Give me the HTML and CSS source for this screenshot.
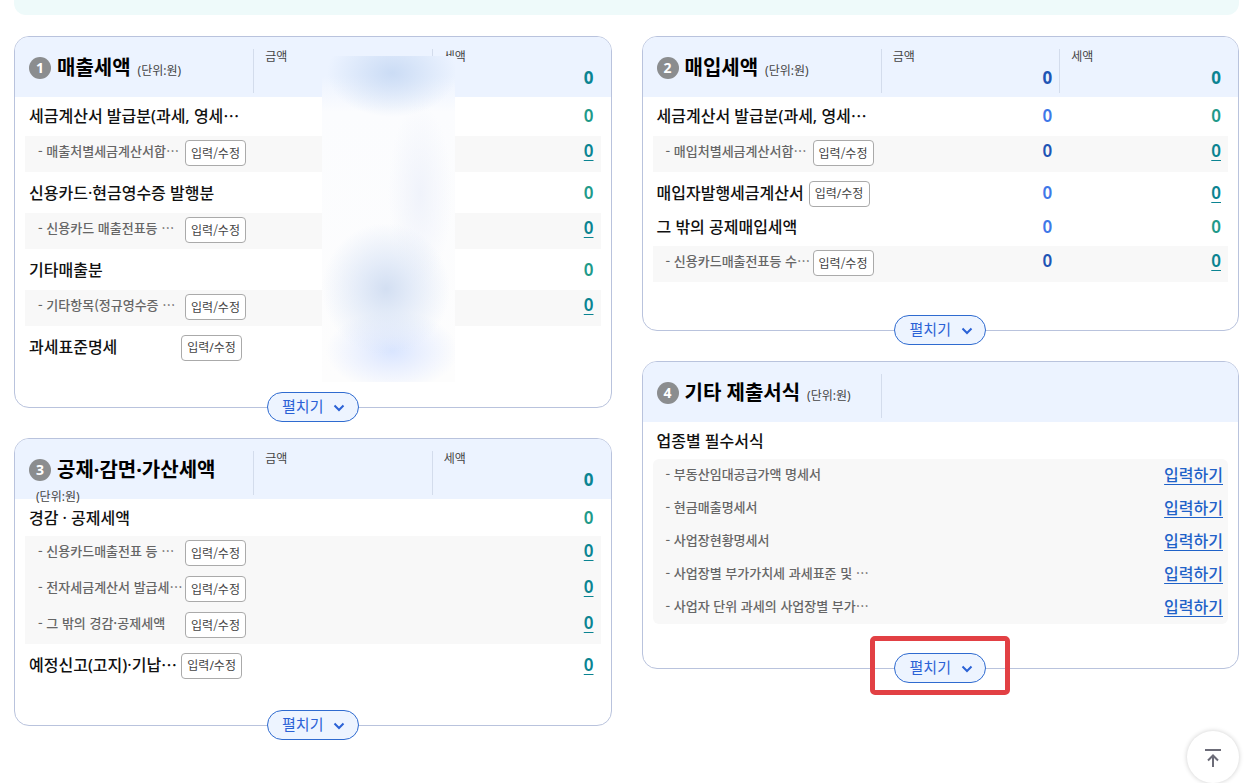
FILE: index.html
```html
<!DOCTYPE html>
<html lang="ko">
<head>
    <meta charset="UTF-8">
    <meta name="viewport" content="width=device-width, initial-scale=1.0">
    <title>부가가치세 신고</title>
    <link rel="stylesheet" href="styles.css">
</head>
<body>
    <div class="banner"></div>

    <main class="board">
        <div class="column">
            <section class="card">
                <table class="tax">
                    <thead>
                        <tr>
                            <th class="col-name"><div class="head-title"><span class="num">1</span><h2>매출세액</h2><span class="unit">(단위:원)</span></div></th>
                            <th class="col-amount"><div class="head-cell"><span>금액</span></div></th>
                            <th class="col-tax"><div class="head-cell"><span>세액</span><b>0</b></div></th>
                        </tr>
                    </thead>
                    <tbody>
                        <tr class="main">
                            <td colspan="2"><div class="item"><span>세금계산서 발급분(과세, 영세⋯</span></div></td>
                            <td class="tax-value">0</td>
                        </tr>
                        <tr class="sub">
                            <td colspan="2"><div class="item"><span class="name">- 매출처별세금계산서합⋯</span><button class="edit" type="button">입력/수정</button></div></td>
                            <td class="tax-value"><a href="#">0</a></td>
                        </tr>
                        <tr class="main">
                            <td colspan="2"><div class="item"><span>신용카드·현금영수증 발행분</span></div></td>
                            <td class="tax-value">0</td>
                        </tr>
                        <tr class="sub">
                            <td colspan="2"><div class="item"><span class="name">- 신용카드 매출전표등 ⋯</span><button class="edit" type="button">입력/수정</button></div></td>
                            <td class="tax-value"><a href="#">0</a></td>
                        </tr>
                        <tr class="main">
                            <td colspan="2"><div class="item"><span>기타매출분</span></div></td>
                            <td class="tax-value">0</td>
                        </tr>
                        <tr class="sub">
                            <td colspan="2"><div class="item"><span class="name">- 기타항목(정규영수증 ⋯</span><button class="edit" type="button">입력/수정</button></div></td>
                            <td class="tax-value"><a href="#">0</a></td>
                        </tr>
                        <tr class="main">
                            <td colspan="2"><div class="item"><span class="name">과세표준명세</span><button class="edit" type="button">입력/수정</button></div></td>
                            <td class="tax-value"></td>
                        </tr>
                    </tbody>
                </table>
                <div class="mask"></div>
                <button class="expand" type="button">펼치기
                    <svg width="12" height="8" viewBox="0 0 12 8"><path d="M1.5 1.5 6 6l4.5-4.5"/></svg>
                </button>
            </section>

            <section class="card">
                <table class="tax tight">
                    <thead>
                        <tr>
                            <th class="col-name"><div class="head-title"><span class="num">3</span><h2>공제·감면·가산세액</h2> <span class="unit">(단위:원)</span></div></th>
                            <th class="col-amount"><div class="head-cell"><span>금액</span></div></th>
                            <th class="col-tax"><div class="head-cell"><span>세액</span><b>0</b></div></th>
                        </tr>
                    </thead>
                    <tbody>
                        <tr class="main">
                            <td colspan="2"><div class="item"><span>경감 · 공제세액</span></div></td>
                            <td class="tax-value">0</td>
                        </tr>
                        <tr class="sub">
                            <td colspan="2"><div class="item"><span class="name">- 신용카드매출전표 등 ⋯</span><button class="edit" type="button">입력/수정</button></div></td>
                            <td class="tax-value"><a href="#">0</a></td>
                        </tr>
                        <tr class="sub">
                            <td colspan="2"><div class="item"><span class="name">- 전자세금계산서 발급세⋯</span><button class="edit" type="button">입력/수정</button></div></td>
                            <td class="tax-value"><a href="#">0</a></td>
                        </tr>
                        <tr class="sub">
                            <td colspan="2"><div class="item"><span class="name">- 그 밖의 경감·공제세액</span><button class="edit" type="button">입력/수정</button></div></td>
                            <td class="tax-value"><a href="#">0</a></td>
                        </tr>
                        <tr class="main">
                            <td colspan="2"><div class="item"><span class="name">예정신고(고지)·기납⋯</span><button class="edit" type="button">입력/수정</button></div></td>
                            <td class="tax-value"><a href="#">0</a></td>
                        </tr>
                    </tbody>
                </table>
                <button class="expand" type="button">펼치기
                    <svg width="12" height="8" viewBox="0 0 12 8"><path d="M1.5 1.5 6 6l4.5-4.5"/></svg>
                </button>
            </section>
        </div>

        <div class="column">
            <section class="card">
                <table class="tax">
                    <thead>
                        <tr>
                            <th class="col-name"><div class="head-title"><span class="num">2</span><h2>매입세액</h2><span class="unit">(단위:원)</span></div></th>
                            <th class="col-amount"><div class="head-cell"><span>금액</span><b>0</b></div></th>
                            <th class="col-tax"><div class="head-cell"><span>세액</span><b>0</b></div></th>
                        </tr>
                    </thead>
                    <tbody>
                        <tr class="main">
                            <td><div class="item"><span>세금계산서 발급분(과세, 영세⋯</span></div></td>
                            <td class="amount-value">0</td>
                            <td class="tax-value">0</td>
                        </tr>
                        <tr class="sub">
                            <td><div class="item"><span class="name">- 매입처별세금계산서합⋯</span><button class="edit" type="button">입력/수정</button></div></td>
                            <td class="amount-value">0</td>
                            <td class="tax-value"><a href="#">0</a></td>
                        </tr>
                        <tr class="main">
                            <td><div class="item"><span class="name">매입자발행세금계산서</span><button class="edit" type="button">입력/수정</button></div></td>
                            <td class="amount-value">0</td>
                            <td class="tax-value"><a href="#">0</a></td>
                        </tr>
                        <tr class="main">
                            <td><div class="item"><span>그 밖의 공제매입세액</span></div></td>
                            <td class="amount-value">0</td>
                            <td class="tax-value">0</td>
                        </tr>
                        <tr class="sub">
                            <td><div class="item"><span class="name">- 신용카드매출전표등 수⋯</span><button class="edit" type="button">입력/수정</button></div></td>
                            <td class="amount-value">0</td>
                            <td class="tax-value"><a href="#">0</a></td>
                        </tr>
                    </tbody>
                </table>
                <button class="expand expand-low" type="button">펼치기
                    <svg width="12" height="8" viewBox="0 0 12 8"><path d="M1.5 1.5 6 6l4.5-4.5"/></svg>
                </button>
            </section>

            <section class="card">
                <div class="forms-head">
                    <div class="head-title"><span class="num">4</span><h2>기타 제출서식</h2><span class="unit">(단위:원)</span></div>
                    <div class="head-cell"></div>
                </div>
                <h3 class="forms-title">업종별 필수서식</h3>
                <ul class="forms">
                    <li><span>- 부동산임대공급가액 명세서</span><a href="#">입력하기</a></li>
                    <li><span>- 현금매출명세서</span><a href="#">입력하기</a></li>
                    <li><span>- 사업장현황명세서</span><a href="#">입력하기</a></li>
                    <li><span>- 사업장별 부가가치세 과세표준 및 ⋯</span><a href="#">입력하기</a></li>
                    <li><span>- 사업자 단위 과세의 사업장별 부가⋯</span><a href="#">입력하기</a></li>
                </ul>
                <button class="expand marked" type="button">펼치기
                    <svg width="12" height="8" viewBox="0 0 12 8"><path d="M1.5 1.5 6 6l4.5-4.5"/></svg>
                </button>
            </section>
        </div>
    </main>

    <button class="to-top" type="button" aria-label="맨 위로">
        <svg width="20" height="22" viewBox="0 0 20 22"><path d="M2 4h16M10 21V10M5 14.5l5-5 5 5"/></svg>
    </button>
</body>
</html>
```
FILE: styles.css
```css
* {
    box-sizing: border-box;
}
body {
    margin: 0;
    min-height: 100vh;
    padding: 0 10px 0 14px;
    font-family: "Noto Sans", "Noto Sans CJK KR", sans-serif;
    font-size: 16px;
    line-height: 24px;
    color: #111;
    background-color: #fff;
}
h2, h3 {
    margin: 0;
}
button {
    font-family: inherit;
    cursor: pointer;
}
.banner {
    height: 15px;
    background-color: #eefafa;
    border-radius: 0 0 12px 12px;
}
.board {
    display: grid;
    grid-template-columns: 1fr 1fr;
    gap: 30px;
    margin-top: 21px;
    align-items: start;
}
.column {
    display: flex;
    flex-direction: column;
    gap: 30px;
}
.card {
    position: relative;
    display: flex;
    flex-direction: column;
    border: 1px solid #b9c3dd;
    border-radius: 15px;
}

/* header */
.tax {
    width: 100%;
    table-layout: fixed;
    border-collapse: separate;
    border-spacing: 0;
}
.tax th {
    padding: 0;
    background-color: #ecf3ff;
    text-align: left;
    vertical-align: top;
    font-weight: normal;
}
.tax th:first-child {
    border-top-left-radius: 14px;
}
.tax th:last-child {
    border-top-right-radius: 14px;
}
.col-name {
    width: 40%;
}
.col-amount, .col-tax {
    width: 30%;
}
.head-title {
    height: 60px;
    padding: 19px 0 0 14px;
    line-height: 24px;
}
.head-title h2 {
    display: inline;
    font-size: 20px;
    font-weight: 700;
    color: #000;
}
.num {
    display: inline-block;
    width: 22px;
    height: 22px;
    margin-right: 6px;
    border-radius: 50%;
    background-color: #8b8d8f;
    color: #fff;
    font-size: 14px;
    font-weight: 700;
    line-height: 21px;
    text-align: center;
    vertical-align: 2px;
}
.unit {
    margin-left: 7px;
    font-size: 12px;
    line-height: 20px;
    white-space: nowrap;
    color: #444;
}
.head-cell {
    display: flex;
    flex-direction: column;
    height: 44px;
    margin-top: 12px;
    padding-left: 11px;
    border-left: 1px solid #d3dcec;
    font-size: 12px;
    line-height: 16px;
    color: #444;
}
.head-cell b {
    align-self: flex-end;
    padding-right: 17px;
    font-size: 17px;
    font-weight: 700;
    line-height: 26px;
    color: #0b8492;
}
.col-amount .head-cell b {
    padding-right: 7px;
    color: #1f55b5;
}

/* rows */
.tax td {
    padding-top: 9px;
    padding-bottom: 8px;
    vertical-align: top;
    background-clip: padding-box;
}
.tax td:first-child {
    padding-left: 0;
    border-left: 10px solid transparent;
}
.tax td:last-child {
    border-right: 10px solid transparent;
}
.tax .main:first-child td {
    padding-top: 7px;
    padding-bottom: 8px;
}
.tax.tight .main:first-child td {
    padding-bottom: 6px;
}
.tax .main + .main td {
    padding-top: 2px;
    padding-bottom: 7px;
}
.tax .sub td {
    padding-top: 3px;
    padding-bottom: 9px;
    background-color: #f8f8f8;
}
.item {
    display: flex;
    height: 24px;
    padding-left: 4px;
    white-space: nowrap;
    font-weight: 500;
}
.main .name {
    flex: 0 0 148px;
    margin-right: 4px;
}
.sub .item {
    padding-left: 13px;
    font-family: "Noto Sans CJK KR", sans-serif;
    font-size: 13px;
    color: #666;
}
.sub .name {
    flex: 0 0 147px;
}
.edit {
    flex: none;
    width: 61px;
    height: 26px;
    padding: 0;
    border: 1px solid #aaa;
    border-radius: 4px;
    background-color: #fff;
    color: #444;
    font-size: 12px;
    line-height: 22px;
}
.sub .edit {
    margin-top: 1px;
}
.amount-value, .tax-value {
    text-align: right;
    font-size: 17px;
    font-weight: 600;
}
.amount-value {
    padding-right: 7px;
    color: #3f78e8;
}
.sub .amount-value {
    color: #1f55b5;
}
.tax-value {
    padding-right: 7px;
    color: #1f9a8a;
}
.tax-value a {
    color: #0b8492;
    text-decoration: underline;
    text-decoration-thickness: 1px;
    text-underline-offset: 3px;
}

/* blurred private amounts */
.mask {
    position: absolute;
    top: 19px;
    left: 307px;
    width: 133px;
    height: 326px;
    background:
        radial-gradient(ellipse 65px 44px at 70px 17px, #cbdcf5 0%, #cbdcf5b3 30%, #e4edfc00 100%),
        radial-gradient(ellipse 64px 66px at 64px 233px, #d3dff2 0%, #d9e4f6b3 40%, #edf2fd00 100%),
        radial-gradient(ellipse 66px 40px at 70px 295px, #d9e5ff 0%, #e0e9ffb3 40%, #f4f7ff00 100%),
        radial-gradient(ellipse 32px 90px at 98px 138px, #f0f3fb 0%, #f6f8fc00 100%),
        linear-gradient(#ecf3ff 0, #ecf3ff 20px, #fbfcfe 56px, #fdfdfd 100%);
}

/* forms */
.forms-head {
    display: grid;
    grid-template-columns: 40% 60%;
    background-color: #ecf3ff;
    border-radius: 14px 14px 0 0;
}
.forms-title {
    padding: 7px 14px 6px;
    font-size: 16px;
    font-weight: 500;
}
.forms {
    margin: 0 10px;
    padding: 0;
    list-style: none;
    background-color: #f8f8f8;
    border-radius: 6px;
}
.forms li {
    display: flex;
    justify-content: space-between;
    padding: 3px 5px 6px 13px;
    font-family: "Noto Sans CJK KR", sans-serif;
    font-size: 13px;
    font-weight: 500;
    color: #666;
}
.forms a {
    font-size: 16px;
    color: #1f62c8;
    text-underline-offset: 3px;
    text-decoration-thickness: 1px;
}

.expand {
    position: relative;
    align-self: center;
    display: flex;
    align-items: center;
    justify-content: center;
    gap: 10px;
    width: 92px;
    height: 30px;
    margin: 25px 0 -15px;
    padding: 0 0 2px 2px;
    border: 1px solid #2f6bd0;
    border-radius: 15px;
    background-color: #edf4ff;
    color: #2b62d6;
    font-size: 15px;
    line-height: 24px;
}
.expand-low {
    margin-top: 33px;
}
.expand svg {
    margin-top: 4px;
    fill: none;
    stroke: #2b62d6;
    stroke-width: 2;
}
.marked {
    margin-top: 29px;
}
.marked::after {
    content: "";
    position: absolute;
    inset: -18px -25px -13px;
    border: 5px solid #e24044;
    border-radius: 5px;
}
.to-top {
    position: fixed;
    right: 10px;
    bottom: 0;
    display: grid;
    place-items: center;
    width: 52px;
    height: 52px;
    padding: 0;
    border: none;
    border-radius: 50%;
    background-color: #fff;
    box-shadow: 0 0 5px rgba(0, 0, 0, 0.2);
}
.to-top svg {
    fill: none;
    stroke: #6c6c78;
    stroke-width: 2;
}
```
